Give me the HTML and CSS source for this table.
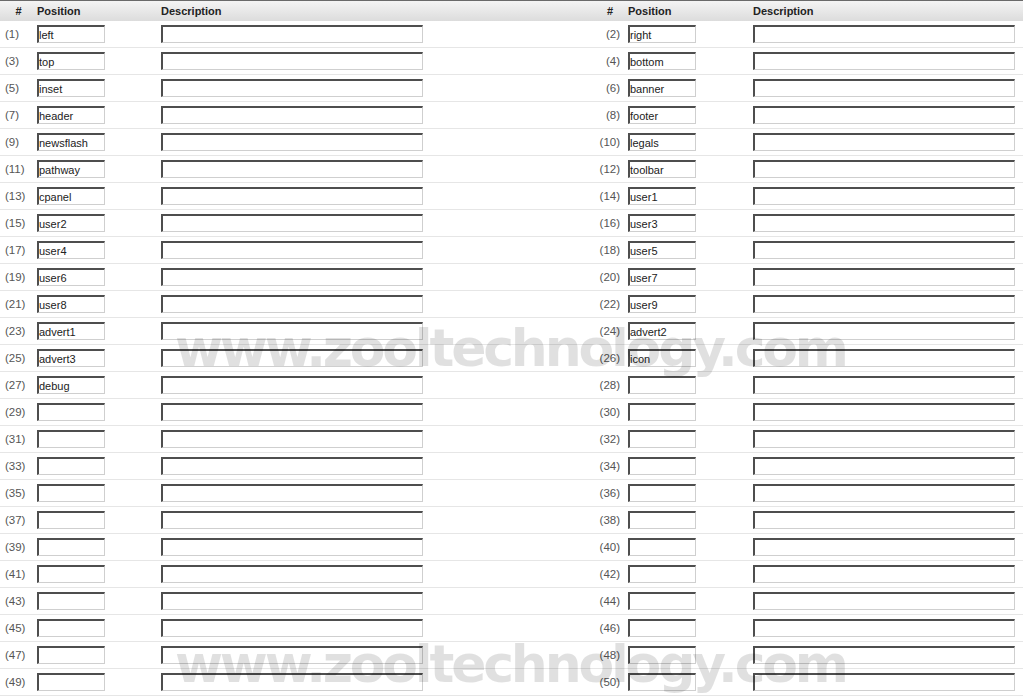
FILE: index.html
```html
<!DOCTYPE html>
<html>
<head>
<meta charset="utf-8">
<link rel="stylesheet" href="styles.css">
</head>
<body>
<div class="page">
  <div class="row head">
    <div class="num-h">#</div><div class="lbl">Position</div><div class="lbl">Description</div>
    <div class="num-h">#</div><div class="lbl">Position</div><div class="lbl">Description</div>
  </div>
  <div class="row"><div class="n l">(1)</div><div><input class="pos" value="left"></div><div><input class="desc"></div><div class="n r">(2)</div><div><input class="pos" value="right"></div><div><input class="desc"></div></div>
  <div class="row"><div class="n l">(3)</div><div><input class="pos" value="top"></div><div><input class="desc"></div><div class="n r">(4)</div><div><input class="pos" value="bottom"></div><div><input class="desc"></div></div>
  <div class="row"><div class="n l">(5)</div><div><input class="pos" value="inset"></div><div><input class="desc"></div><div class="n r">(6)</div><div><input class="pos" value="banner"></div><div><input class="desc"></div></div>
  <div class="row"><div class="n l">(7)</div><div><input class="pos" value="header"></div><div><input class="desc"></div><div class="n r">(8)</div><div><input class="pos" value="footer"></div><div><input class="desc"></div></div>
  <div class="row"><div class="n l">(9)</div><div><input class="pos" value="newsflash"></div><div><input class="desc"></div><div class="n r">(10)</div><div><input class="pos" value="legals"></div><div><input class="desc"></div></div>
  <div class="row"><div class="n l">(11)</div><div><input class="pos" value="pathway"></div><div><input class="desc"></div><div class="n r">(12)</div><div><input class="pos" value="toolbar"></div><div><input class="desc"></div></div>
  <div class="row"><div class="n l">(13)</div><div><input class="pos" value="cpanel"></div><div><input class="desc"></div><div class="n r">(14)</div><div><input class="pos" value="user1"></div><div><input class="desc"></div></div>
  <div class="row"><div class="n l">(15)</div><div><input class="pos" value="user2"></div><div><input class="desc"></div><div class="n r">(16)</div><div><input class="pos" value="user3"></div><div><input class="desc"></div></div>
  <div class="row"><div class="n l">(17)</div><div><input class="pos" value="user4"></div><div><input class="desc"></div><div class="n r">(18)</div><div><input class="pos" value="user5"></div><div><input class="desc"></div></div>
  <div class="row"><div class="n l">(19)</div><div><input class="pos" value="user6"></div><div><input class="desc"></div><div class="n r">(20)</div><div><input class="pos" value="user7"></div><div><input class="desc"></div></div>
  <div class="row"><div class="n l">(21)</div><div><input class="pos" value="user8"></div><div><input class="desc"></div><div class="n r">(22)</div><div><input class="pos" value="user9"></div><div><input class="desc"></div></div>
  <div class="row"><div class="n l">(23)</div><div><input class="pos" value="advert1"></div><div><input class="desc"></div><div class="n r">(24)</div><div><input class="pos" value="advert2"></div><div><input class="desc"></div></div>
  <div class="row"><div class="n l">(25)</div><div><input class="pos" value="advert3"></div><div><input class="desc"></div><div class="n r">(26)</div><div><input class="pos" value="icon"></div><div><input class="desc"></div></div>
  <div class="row"><div class="n l">(27)</div><div><input class="pos" value="debug"></div><div><input class="desc"></div><div class="n r">(28)</div><div><input class="pos"></div><div><input class="desc"></div></div>
  <div class="row"><div class="n l">(29)</div><div><input class="pos"></div><div><input class="desc"></div><div class="n r">(30)</div><div><input class="pos"></div><div><input class="desc"></div></div>
  <div class="row"><div class="n l">(31)</div><div><input class="pos"></div><div><input class="desc"></div><div class="n r">(32)</div><div><input class="pos"></div><div><input class="desc"></div></div>
  <div class="row"><div class="n l">(33)</div><div><input class="pos"></div><div><input class="desc"></div><div class="n r">(34)</div><div><input class="pos"></div><div><input class="desc"></div></div>
  <div class="row"><div class="n l">(35)</div><div><input class="pos"></div><div><input class="desc"></div><div class="n r">(36)</div><div><input class="pos"></div><div><input class="desc"></div></div>
  <div class="row"><div class="n l">(37)</div><div><input class="pos"></div><div><input class="desc"></div><div class="n r">(38)</div><div><input class="pos"></div><div><input class="desc"></div></div>
  <div class="row"><div class="n l">(39)</div><div><input class="pos"></div><div><input class="desc"></div><div class="n r">(40)</div><div><input class="pos"></div><div><input class="desc"></div></div>
  <div class="row"><div class="n l">(41)</div><div><input class="pos"></div><div><input class="desc"></div><div class="n r">(42)</div><div><input class="pos"></div><div><input class="desc"></div></div>
  <div class="row"><div class="n l">(43)</div><div><input class="pos"></div><div><input class="desc"></div><div class="n r">(44)</div><div><input class="pos"></div><div><input class="desc"></div></div>
  <div class="row"><div class="n l">(45)</div><div><input class="pos"></div><div><input class="desc"></div><div class="n r">(46)</div><div><input class="pos"></div><div><input class="desc"></div></div>
  <div class="row"><div class="n l">(47)</div><div><input class="pos"></div><div><input class="desc"></div><div class="n r">(48)</div><div><input class="pos"></div><div><input class="desc"></div></div>
  <div class="row"><div class="n l">(49)</div><div><input class="pos"></div><div><input class="desc"></div><div class="n r">(50)</div><div><input class="pos"></div><div><input class="desc"></div></div>
  <div class="wm wm1">www.zooltechnology.com</div>
  <div class="wm wm2">www.zooltechnology.com</div>
</div>
</body>
</html>
```

FILE: styles.css
```css
html, body {
  margin: 0;
  padding: 0;
  background: #fff;
}
body {
  font-family: "Liberation Sans", Arial, sans-serif;
  font-size: 11px;
  color: #333;
}
.page {
  position: relative;
  width: 1023px;
  height: 700px;
  overflow: hidden;
}
.row {
  display: grid;
  grid-template-columns: 37px 124px 431px 36px 125px 270px;
  align-items: center;
  height: 26px;
  border-bottom: 1px solid #e6e6e6;
}
.row > div {
  display: flex;
  align-items: center;
}
.row.head {
  height: 20px;
  border-top: 1px solid #6a6a6a;
  border-bottom: none;
  background: linear-gradient(#f4f4f4, #dcdcdc);
  font-weight: bold;
  color: #222;
}
.num-h {
  justify-content: center;
}
.n {
  color: #555;
  font-size: 11.5px;
}
.n.l {
  padding-left: 5px;
}
.n.r {
  justify-content: flex-end;
  padding-right: 8px;
}
input {
  box-sizing: border-box;
  height: 18px;
  margin: 0;
  padding: 0;
  font-family: "Liberation Sans", Arial, sans-serif;
  font-size: 11px;
  color: #222;
  background: #fff;
  border-top: 2px solid #4e4e4e;
  border-left: 2px solid #4e4e4e;
  border-right: 1px solid #cfcfcf;
  border-bottom: 1px solid #cfcfcf;
  outline: none;
}
.pos {
  width: 68px;
}
.desc {
  width: 262px;
}
.wm {
  position: absolute;
  left: 175px;
  font-family: "DejaVu Sans", "Liberation Sans", sans-serif;
  font-weight: bold;
  font-size: 52px;
  line-height: 52px;
  letter-spacing: -3.2px;
  color: rgba(0, 0, 0, 0.12);
  white-space: nowrap;
  pointer-events: none;
}
.wm1 {
  top: 322px;
}
.wm2 {
  top: 638px;
}
```
